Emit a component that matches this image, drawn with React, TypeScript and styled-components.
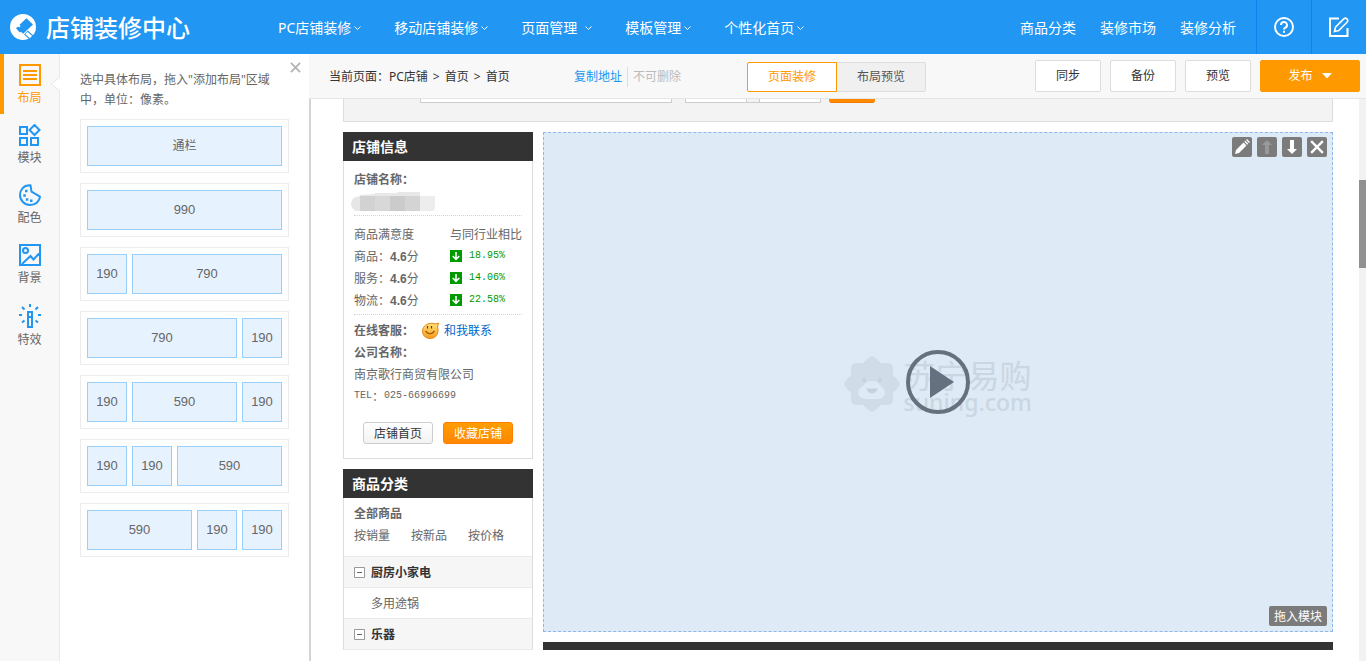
import React from 'react';
import styled, { createGlobalStyle, css } from 'styled-components';

const sans = '"Noto Sans", "Noto Sans CJK SC", sans-serif';
const song = '"Noto Sans CJK SC", sans-serif';

const GlobalStyle = createGlobalStyle`
  *, *::before, *::after { box-sizing: border-box; }
  body { margin: 0; font: 12px/20px ${sans}; color: #333; background: #fff; }
  button, input { font: inherit; color: inherit; margin: 0; padding: 0; }
  button { cursor: pointer; }
  a { color: inherit; text-decoration: none; }
  svg { display: block; }
`;

const Shell = styled.div`
  display: flex;
  flex-direction: column;
  height: 100vh;
  overflow: hidden;
`;

/* ---------- header ---------- */

const Header = styled.header`
  display: flex;
  flex: none;
  height: 54px;
  background: #2196f3;
  color: #fff;
  font-size: 14px;
`;

const Brand = styled.a`
  display: flex;
  align-items: center;
  gap: 9px;
  width: 278px;
  padding-left: 10px;
  font: 500 24px/32px ${song};
  white-space: nowrap;
`;

const MainNav = styled.nav`
  display: flex;
  flex: 1;
  align-items: center;
  gap: 33px;
  padding-top: 2px;
`;

const NavButton = styled.button<{ $wide?: boolean }>`
  display: flex;
  align-items: center;
  gap: ${(p) => (p.$wide ? 8 : 3)}px;
  border: 0;
  background: none;
  white-space: nowrap;
`;

const QuickLinks = styled.nav`
  display: flex;
  align-items: center;
  gap: 24px;
  margin-right: 20px;
  padding-top: 2px;
  white-space: nowrap;
`;

const HeaderIcon = styled.button`
  display: flex;
  align-items: center;
  justify-content: center;
  width: 55px;
  border: 0;
  border-left: 1px solid #0c86ec;
  background: none;
`;

/* ---------- left side ---------- */

const Body = styled.div`
  display: flex;
  flex: 1;
  min-height: 0;
`;

const Rail = styled.nav`
  flex: none;
  width: 60px;
  background: #f8f8f8;
  border-right: 1px solid #eaeaea;
`;

const RailButton = styled.button<{ $active?: boolean }>`
  position: relative;
  display: flex;
  flex-direction: column;
  align-items: center;
  gap: 2px;
  width: 59px;
  height: 60px;
  padding: 10px 4px 0 0;
  border: 0;
  border-left: 4px solid ${(p) => (p.$active ? '#ff9900' : 'transparent')};
  background: none;
  color: ${(p) => (p.$active ? '#ff9900' : '#666')};
  svg { color: ${(p) => (p.$active ? '#ff9900' : '#2196f3')}; }
`;

const Notch = styled.svg`
  position: absolute;
  right: -1px;
  top: 23px;
`;

const Panel = styled.aside`
  position: relative;
  flex: none;
  width: 249px;
  padding: 16px 20px;
  background: #fff;
`;

const CloseButton = styled.button`
  position: absolute;
  top: 7px;
  right: 7px;
  padding: 1px;
  border: 0;
  background: none;
`;

const Hint = styled.p`
  margin: 0 0 9px;
  color: #666;
`;

const LayoutList = styled.div`
  display: flex;
  flex-direction: column;
  gap: 10px;
`;

const LayoutCard = styled.button`
  display: flex;
  gap: 5px;
  height: 54px;
  padding: 6px;
  border: 1px solid #ececec;
  background: #fff;
`;

const LayoutCell = styled.span<{ $narrow?: boolean; $text?: boolean }>`
  display: flex;
  align-items: center;
  justify-content: center;
  flex: ${(p) => (p.$narrow ? '0 0 40px' : '1')};
  height: 40px;
  border: 1px solid #99cffb;
  background: #e6f3ff;
  color: #666;
  font-family: "Liberation Sans", "Noto Sans CJK SC", sans-serif;
  font-size: ${(p) => (p.$text ? 12 : 13)}px;
`;

/* ---------- toolbar ---------- */

const Work = styled.main`
  display: flex;
  flex: 1;
  flex-direction: column;
  min-width: 0;
`;

const Toolbar = styled.div`
  display: flex;
  flex: none;
  align-items: center;
  height: 45px;
  padding: 0 6px 0 20px;
  border-bottom: 1px solid #e6e6e6;
  background: #f8f8f8;
  white-space: nowrap;
`;

const Crumbs = styled.div`
  display: flex;
  gap: 5px;
  width: 245px;
  padding-top: 2px;
`;

const PageActions = styled.div`
  display: flex;
  flex: 1;
  align-items: center;
  padding-top: 2px;
`;

const CopyLink = styled.a`
  padding-right: 5px;
  border-right: 1px solid #ddd;
  color: #2196f3;
`;

const Disabled = styled.span`
  padding-left: 5px;
  color: #bbb;
`;

const Segments = styled.div`
  display: flex;
  margin-right: 109px;
  padding-top: 1px;
`;

const Segment = styled.button<{ $active?: boolean }>`
  width: ${(p) => (p.$active ? 90 : 89)}px;
  height: 30px;
  border: 1px solid ${(p) => (p.$active ? '#ff9900' : '#ddd')};
  border-left-width: ${(p) => (p.$active ? 1 : 0)}px;
  border-radius: ${(p) => (p.$active ? '2px 0 0 2px' : '0 2px 2px 0')};
  background: ${(p) => (p.$active ? '#fff' : '#f0f0f0')};
  color: ${(p) => (p.$active ? '#ff9900' : '#555')};
`;

const Actions = styled.div`
  display: flex;
  gap: 9px;
`;

const ActionButton = styled.button<{ $primary?: boolean }>`
  display: flex;
  align-items: center;
  justify-content: center;
  gap: 9px;
  width: ${(p) => (p.$primary ? 100 : 66)}px;
  height: 32px;
  border: 1px solid ${(p) => (p.$primary ? '#ff9900' : '#ddd')};
  border-radius: 2px;
  background: ${(p) => (p.$primary ? '#ff9900' : '#fff')};
  color: ${(p) => (p.$primary ? '#fff' : '#333')};
`;

/* ---------- canvas ---------- */

const Viewport = styled.div`
  display: flex;
  flex: 1;
  min-height: 0;
  border-left: 2px solid #d4d4d4;
`;

const Canvas = styled.div`
  flex: 1;
  min-width: 0;
  margin-bottom: 11px;
  padding: 0 26px 0 32px;
  overflow: hidden;
  font-family: ${song};
`;

const ScrollTrack = styled.div`
  flex: none;
  width: 7px;
  padding-top: 81px;
  background: #f2f2f2;
`;

const ScrollThumb = styled.div`
  height: 88px;
  background: #919191;
`;

const SearchStrip = styled.div`
  display: flex;
  align-items: flex-end;
  height: 23px;
  margin-bottom: 10px;
  padding: 0 0 18px 76px;
  border: 1px solid #ddd;
  border-top: 0;
  background: #f3f3f3;
  overflow: hidden;
`;

const SearchInput = styled.input<{ $width: number }>`
  width: ${(p) => p.$width}px;
  height: 24px;
  border: 1px solid #ccc;
  background: #fff;
`;

const PriceRange = styled.div`
  display: flex;
  gap: 12px;
  margin: 0 8px 0 13px;
  background: linear-gradient(#ccc, #ccc) bottom / 100% 1px no-repeat;
`;

const SearchButton = styled.button`
  width: 46px;
  height: 24px;
  border: 0;
  border-bottom: 1px solid #f57a00;
  border-radius: 3px;
  background: #ff8a00;
`;

const Columns = styled.div`
  display: flex;
  align-items: flex-start;
  gap: 10px;
`;

const Side = styled.div`
  display: flex;
  flex: none;
  flex-direction: column;
  gap: 10px;
  width: 190px;
`;

const Card = styled.section`
  color: #666;
  line-height: 22px;
`;

const CardTitle = styled.h2`
  height: 29px;
  margin: 0;
  padding-left: 9px;
  background: #333;
  color: #fff;
  font-size: 14px;
  font-weight: 700;
  line-height: 29px;
`;

const CardBody = styled.div<{ $flush?: boolean }>`
  border: 1px solid #ddd;
  border-top: 0;
  padding: ${(p) => (p.$flush ? '4px 0 0' : '7px 10px 14px')};
`;

const Line = styled.div`
  display: flex;
  align-items: center;
  height: 22px;
  white-space: nowrap;
`;

const Contact = styled.a`
  display: flex;
  align-items: center;
  gap: 5px;
  margin-left: 8px;
  color: #0066cc;
`;

const Mask = styled.svg`
  margin-left: -3px;
`;

const Scores = styled.table`
  width: 100%;
  margin: 3px 0 4px;
  border-collapse: separate;
  border-spacing: 0;
  border-top: 1px dotted #d4d4d4;
  border-bottom: 1px dotted #d4d4d4;
  padding: 7px 0 3px;
  line-height: 20px;
  th, td {
    height: 22px;
    padding: 0;
    font-weight: 400;
    text-align: left;
    white-space: nowrap;
  }
  th:first-child { width: 96px; }
`;

const Score = styled.b`
  font-family: "Liberation Sans", sans-serif;
  line-height: 16px;
`;

const Compare = styled.span`
  display: flex;
  align-items: center;
  gap: 7px;
  color: #009900;
`;

const Mono = styled.span`
  font-family: "Liberation Mono", monospace;
  font-size: 10px;
`;

const ShopButtons = styled.div`
  display: flex;
  gap: 10px;
  margin: 15px 9px 0;
`;

const ShopButton = styled.button<{ $primary?: boolean }>`
  width: 70px;
  height: 22px;
  border: 1px solid #ccc;
  border-radius: 3px;
  background: linear-gradient(#fff, #f3f3f3);
  color: #333;
  line-height: 20px;
  ${(p) =>
    p.$primary &&
    css`
      border-color: #ff7e00;
      background: linear-gradient(#ff9d00, #ff8700);
      color: #fff;
    `}
`;

const CategoryTop = styled.div`
  padding: 0 10px 10px;
`;

const SortLinks = styled(Line)`
  gap: 21px;
`;

const CategoryRow = styled.div<{ $group?: boolean }>`
  display: flex;
  align-items: center;
  gap: 6px;
  height: 31px;
  padding-left: ${(p) => (p.$group ? 10 : 27)}px;
  border-top: 1px solid #eaeaea;
  background: ${(p) => (p.$group ? '#f6f6f6' : '#fff')};
  color: ${(p) => (p.$group ? '#333' : '#666')};
  font-weight: ${(p) => (p.$group ? 700 : 400)};
`;

const CategoryEnd = styled.div`
  border-top: 1px solid #eaeaea;
  height: 31px;
`;

const FoldButton = styled.button`
  display: flex;
  border: 0;
  background: none;
`;

const Stage = styled.div`
  flex: 1;
  min-width: 0;
`;

const DropZone = styled.div`
  display: flex;
  flex-direction: column;
  justify-content: space-between;
  height: 500px;
  margin-bottom: 10px;
  padding: 4px 5px 5px;
  border: 1px dashed #8db8e8;
  background: #deeaf6;
`;

const ZoneTools = styled.div`
  display: flex;
  justify-content: flex-end;
  gap: 5px;
`;

const ZoneButton = styled.button<{ $text?: boolean }>`
  display: flex;
  align-items: center;
  justify-content: center;
  width: ${(p) => (p.$text ? 58 : 20)}px;
  height: 20px;
  border: 0;
  border-radius: 2px;
  background: #7b7b7b;
  color: #fff;
`;

const Watermark = styled.div`
  position: relative;
  display: flex;
  align-items: flex-start;
  align-self: center;
  gap: 4px;
  height: 64px;
  padding-top: 6px;
  color: #cad6e1;
`;

const Wordmark = styled.div`
  width: 129px;
  font-size: 32px;
  line-height: 36px;
  white-space: nowrap;
`;

const Domain = styled.div`
  font-family: "Noto Sans", sans-serif;
  font-size: 23px;
  font-weight: 500;
  line-height: 20px;
`;

const PlayButton = styled.button`
  position: absolute;
  top: 0;
  left: 50%;
  margin-left: -32px;
  border: 0;
  background: none;
`;

const NextBar = styled.div`
  height: 29px;
  background: #333;
`;

/* ---------- drawings ---------- */

const Logo = () => (
  <svg width="27" height="28" viewBox="0 0 27 28" aria-hidden="true">
    <circle cx="13" cy="14" r="13" fill="#fff" />
    <path d="M6 15.2 8 13.4 9.2 14.4 10.6 13 9.6 11.8 16.4 5.2 23 11.6 13.2 20.8 11 18.8 9.8 19.6Z" fill="#2196f3" />
    <path d="M16 19.500 22.500 25.500" stroke="#2196f3" strokeWidth="5.500" />
    <path d="M16.400 20 21 24" stroke="#fff" strokeWidth="3" />
  </svg>
);

const Chevron = () => (
  <svg width="7" height="5" viewBox="0 0 7 5" aria-hidden="true">
    <path d="M.5.5 3.5 3.5 6.5.5" fill="none" stroke="#fff" />
  </svg>
);

const HelpIcon = () => (
  <svg width="20" height="20" viewBox="0 0 20 20" fill="none" stroke="#fff" strokeWidth="2" aria-hidden="true">
    <circle cx="10" cy="10" r="9" />
    <path d="M7 8a3 3 0 1 1 4.4 2.6Q10 11.3 10 12.6" />
    <path d="M10 13.8v2" />
  </svg>
);

const EditIcon = () => (
  <svg width="20" height="20" viewBox="0 0 20 20" fill="none" stroke="#fff" aria-hidden="true">
    <path d="M10 1.5H1V19H18.5V11" strokeWidth="2" />
    <path d="M5.5 14.5 6.5 10.2 15 1.7Q16.4.4 17.9 1.9T18.2 5L9.8 13.5Z" strokeWidth="1.6" />
  </svg>
);

const iconProps = {
  width: 22,
  height: 22,
  viewBox: '0 0 22 22',
  fill: 'none',
  stroke: 'currentColor',
  strokeWidth: 2,
  'aria-hidden': true,
} as const;

const LayoutIcon = () => (
  <svg {...iconProps}>
    <path d="M1 1H21V21H1ZM4 7H18M4 11H18M4 15H18" />
  </svg>
);

const ModuleIcon = () => (
  <svg {...iconProps}>
    <path d="M1 3H8V10H1ZM1 14H8V21H1ZM12 14H19V21H12ZM15.5 1 20.5 6 15.5 11 10.5 6Z" />
  </svg>
);

const PaletteIcon = () => (
  <svg {...iconProps}>
    <path d="M11.5 1.2C4.5.8 1 6 1 11A10 10 0 0 0 11 21C17 21 20.5 17 21 12.6L12.5 7.6Z" strokeLinejoin="round" />
    <path d="M6 7h2.500M4.300 11.500h2.500M6.800 15.500h2.500M11 16.800h2.500" strokeWidth="2.600" />
  </svg>
);

const PictureIcon = () => (
  <svg {...iconProps}>
    <path d="M1 1H21V21H1ZM3 20 11.500 12 14.500 15.500 21 8.500" />
    <circle cx="6.500" cy="6.500" r="2.500" />
  </svg>
);

const EffectIcon = () => (
  <svg {...iconProps} height={24} viewBox="0 0 22 24">
    <path d="M9 8H13V23H9ZM9 13H13M11 0V3M0 11H3M19 11H22M3 3 5.500 5.500M19 3 16.500 5.500M3 18.500 5.500 16.500M19 18.500 16.500 16.500" />
  </svg>
);

const DownBadge = () => (
  <svg width="12" height="12" viewBox="0 0 12 12" aria-hidden="true">
    <path fill="#009900" d="M0 0H12V12H0Z" />
    <path d="M6 2V9M2.700 6 6 9.300 9.300 6" fill="none" stroke="#fff" strokeWidth="1.600" />
  </svg>
);

const Smiley = () => (
  <svg width="17" height="17" viewBox="0 0 17 17" aria-hidden="true">
    <defs>
      <linearGradient id="face" x1="0" y1="0" x2="0" y2="1">
        <stop offset="0" stopColor="#ffe27a" />
        <stop offset="1" stopColor="#f79a1c" />
      </linearGradient>
    </defs>
    <path d="M8 1.500C10 1 12 1.500 13 2L16.500 1.200 15.500 5C17 9 15.500 16.300 8.300 16.500 2 16.300.6 12 .6 9S3 1.800 8 1.500Z" fill="url(#face)" stroke="#e08414" />
    <path d="M5.500 4V6.500M9.500 4V6.500" stroke="#6b3a00" strokeWidth="1.200" />
    <path d="M3.500 9Q8 14.500 12.500 9" fill="none" stroke="#a65300" strokeWidth="1.200" />
  </svg>
);

const MaskedName = () => (
  <Mask width="84" height="19" viewBox="0 0 84 19" aria-hidden="true">
    <path d="M9 3 24 2V1H46V0H69V4H9Z" fill="#e8e8e8" />
    <path d="M9 4V19H5Q0 17 0 11 1 5 9 4Z" fill="#e6e6e6" />
    <path d="M9 4H24V19H9Z" fill="#d2d2d2" />
    <path d="M24 4H39V19H24Z" fill="#d8d8d8" />
    <path d="M39 4H54V19H39Z" fill="#cbcbcb" />
    <path d="M54 4H69V19H54Z" fill="#d4d4d4" />
    <path d="M69 4H84V17L82 19H69Z" fill="#ededed" />
  </Mask>
);

const FoldIcon = () => (
  <svg width="11" height="11" viewBox="0 0 11 11" aria-hidden="true">
    <path d="M.5.5H10.500V10.500H.5Z" fill="#fff" stroke="#999" />
    <path d="M3 5.500H8" stroke="#666" />
  </svg>
);

const PencilIcon = () => (
  <svg width="16" height="16" viewBox="0 0 16 16" fill="#fff" aria-hidden="true">
    <path d="M1 15 2 11 9.500 3.500 12.500 6.500 5 14ZM10.300 2.700 11.300 1.700 14.300 4.700 13.300 5.700ZM12 1 13 0 16 3 15 4Z" />
  </svg>
);

const ArrowIcon = ({ up }: { up?: boolean }) => (
  <svg width="12" height="14" viewBox="0 0 12 14" aria-hidden="true">
    {up ? <path d="M6 0 11 5H8V14H4V5H1Z" fill="#999" /> : <path d="M6 14 11 9H8V0H4V9H1Z" fill="#fff" />}
  </svg>
);

const CrossIcon = ({ color, size }: { color: string; size: number }) => (
  <svg width={size} height={size} viewBox="0 0 12 12" aria-hidden="true">
    <path d="M1 1 11 11M11 1 1 11" stroke={color} strokeWidth="2" />
  </svg>
);

const Lion = () => (
  <svg width="56" height="56" viewBox="0 0 56 56" fill="#d0dce8" aria-hidden="true">
    <rect x="7" y="7" width="42" height="42" rx="5" />
    <rect x="7" y="7" width="42" height="42" rx="5" transform="rotate(45 28 28)" />
    <path d="M28 25C35 25 36 30 39 32 43 37 40 43 34 43H22C15 43 12 37 16 32 20 30 21 25 28 25Z" fill="#deeaf6" />
    <path d="M22 32.500H34Q32 37 28 37.500 24 37 22 32.500Z" fill="#c5d1dd" />
    <circle cx="20" cy="24" r="2" fill="#c5d1dd" />
    <circle cx="36" cy="24" r="2" fill="#c5d1dd" />
  </svg>
);

/* ---------- page ---------- */

const navItems = ['PC店铺装修', '移动店铺装修', '页面管理', '模板管理', '个性化首页'];

const railItems = [
  { label: '布局', Icon: LayoutIcon },
  { label: '模块', Icon: ModuleIcon },
  { label: '配色', Icon: PaletteIcon },
  { label: '背景', Icon: PictureIcon },
  { label: '特效', Icon: EffectIcon },
];

const layouts = [
  ['通栏'],
  ['990'],
  ['190', '790'],
  ['790', '190'],
  ['190', '590', '190'],
  ['190', '190', '590'],
  ['590', '190', '190'],
];

const scores = [
  ['商品', '18.95%'],
  ['服务', '14.06%'],
  ['物流', '22.58%'],
];

export default function App() {
  return (
    <Shell>
      <GlobalStyle />
      <Header>
        <Brand href="#">
          <Logo />
          店铺装修中心
        </Brand>
        <MainNav>
          {navItems.map((item) => (
            <NavButton key={item} $wide={item === '页面管理'}>
              {item}
              <Chevron />
            </NavButton>
          ))}
        </MainNav>
        <QuickLinks>
          <a href="#">商品分类</a>
          <a href="#">装修市场</a>
          <a href="#">装修分析</a>
        </QuickLinks>
        <HeaderIcon aria-label="帮助"><HelpIcon /></HeaderIcon>
        <HeaderIcon aria-label="反馈"><EditIcon /></HeaderIcon>
      </Header>
      <Body>
        <Rail>
          {railItems.map(({ label, Icon }, i) => (
            <RailButton key={label} $active={i === 0}>
              <Icon />
              {label}
              {i === 0 && (
                <Notch width="10" height="14" viewBox="0 0 10 14">
                  <path d="M10 0 1 7 10 14Z" fill="#fff" />
                  <path d="M9.500.5 1 7 9.500 13.500" fill="none" stroke="#e6e6e6" />
                </Notch>
              )}
            </RailButton>
          ))}
        </Rail>
        <Panel>
          <CloseButton aria-label="关闭"><CrossIcon color="#b4b4b4" size={11} /></CloseButton>
          <Hint>选中具体布局，拖入"添加布局"区域中，单位：像素。</Hint>
          <LayoutList>
            {layouts.map((cells) => (
              <LayoutCard key={cells.join('-')}>
                {cells.map((cell, i) => (
                  <LayoutCell key={i} $narrow={cell === '190'} $text={cell === '通栏'}>{cell}</LayoutCell>
                ))}
              </LayoutCard>
            ))}
          </LayoutList>
        </Panel>
        <Work>
          <Toolbar>
            <Crumbs>
              <span>当前页面：PC店铺</span>
              <span>&gt;</span>
              <span>首页</span>
              <span>&gt;</span>
              <span>首页</span>
            </Crumbs>
            <PageActions>
              <CopyLink href="#">复制地址</CopyLink>
              <Disabled>不可删除</Disabled>
            </PageActions>
            <Segments>
              <Segment $active>页面装修</Segment>
              <Segment>布局预览</Segment>
            </Segments>
            <Actions>
              <ActionButton>同步</ActionButton>
              <ActionButton>备份</ActionButton>
              <ActionButton>预览</ActionButton>
              <ActionButton $primary>
                发布
                <svg width="10" height="6" viewBox="0 0 10 6" aria-hidden="true">
                  <path d="M0 0H10L5 5.500Z" fill="#fff" />
                </svg>
              </ActionButton>
            </Actions>
          </Toolbar>
          <Viewport>
            <Canvas>
              <SearchStrip>
                <SearchInput $width={252} aria-label="关键字" />
                <PriceRange>
                  <SearchInput $width={62} aria-label="最低价" />
                  <SearchInput $width={62} aria-label="最高价" />
                </PriceRange>
                <SearchButton aria-label="搜索" />
              </SearchStrip>
              <Columns>
                <Side>
                  <Card>
                    <CardTitle>店铺信息</CardTitle>
                    <CardBody>
                      <Line><b>店铺名称：</b></Line>
                      <Line><MaskedName /></Line>
                      <Scores>
                        <thead>
                          <tr>
                            <th>商品满意度</th>
                            <th>与同行业相比</th>
                          </tr>
                        </thead>
                        <tbody>
                          {scores.map(([name, diff]) => (
                            <tr key={name}>
                              <td>{name}：<Score>4.6</Score>分</td>
                              <td>
                                <Compare>
                                  <DownBadge />
                                  <Mono>{diff}</Mono>
                                </Compare>
                              </td>
                            </tr>
                          ))}
                        </tbody>
                      </Scores>
                      <Line>
                        <b>在线客服：</b>
                        <Contact href="#"><Smiley />和我联系</Contact>
                      </Line>
                      <Line><b>公司名称：</b></Line>
                      <Line>南京歌行商贸有限公司</Line>
                      <Line><Mono>TEL</Mono>：<Mono>025-66996699</Mono></Line>
                      <ShopButtons>
                        <ShopButton>店铺首页</ShopButton>
                        <ShopButton $primary>收藏店铺</ShopButton>
                      </ShopButtons>
                    </CardBody>
                  </Card>
                  <Card>
                    <CardTitle>商品分类</CardTitle>
                    <CardBody $flush>
                      <CategoryTop>
                        <Line><b>全部商品</b></Line>
                        <SortLinks>
                          <a href="#">按销量</a>
                          <a href="#">按新品</a>
                          <a href="#">按价格</a>
                        </SortLinks>
                      </CategoryTop>
                      <CategoryRow $group>
                        <FoldButton aria-label="收起"><FoldIcon /></FoldButton>
                        厨房小家电
                      </CategoryRow>
                      <CategoryRow><a href="#">多用途锅</a></CategoryRow>
                      <CategoryRow $group>
                        <FoldButton aria-label="收起"><FoldIcon /></FoldButton>
                        乐器
                      </CategoryRow>
                      <CategoryEnd />
                    </CardBody>
                  </Card>
                </Side>
                <Stage>
                  <DropZone>
                    <ZoneTools>
                      <ZoneButton aria-label="编辑"><PencilIcon /></ZoneButton>
                      <ZoneButton aria-label="上移" disabled><ArrowIcon up /></ZoneButton>
                      <ZoneButton aria-label="下移"><ArrowIcon /></ZoneButton>
                      <ZoneButton aria-label="删除"><CrossIcon color="#fff" size={14} /></ZoneButton>
                    </ZoneTools>
                    <Watermark>
                      <Lion />
                      <Wordmark>
                        苏宁易购
                        <Domain>suning.com</Domain>
                      </Wordmark>
                      <PlayButton aria-label="播放">
                        <svg width="64" height="64" viewBox="0 0 64 64">
                          <circle cx="32" cy="32" r="30" fill="none" stroke="#65717e" strokeWidth="4" />
                          <path d="M24 16V48L48 32Z" fill="#65717e" />
                        </svg>
                      </PlayButton>
                    </Watermark>
                    <ZoneTools>
                      <ZoneButton $text>拖入模块</ZoneButton>
                    </ZoneTools>
                  </DropZone>
                  <NextBar />
                </Stage>
              </Columns>
            </Canvas>
            <ScrollTrack><ScrollThumb /></ScrollTrack>
          </Viewport>
        </Work>
      </Body>
    </Shell>
  );
}
